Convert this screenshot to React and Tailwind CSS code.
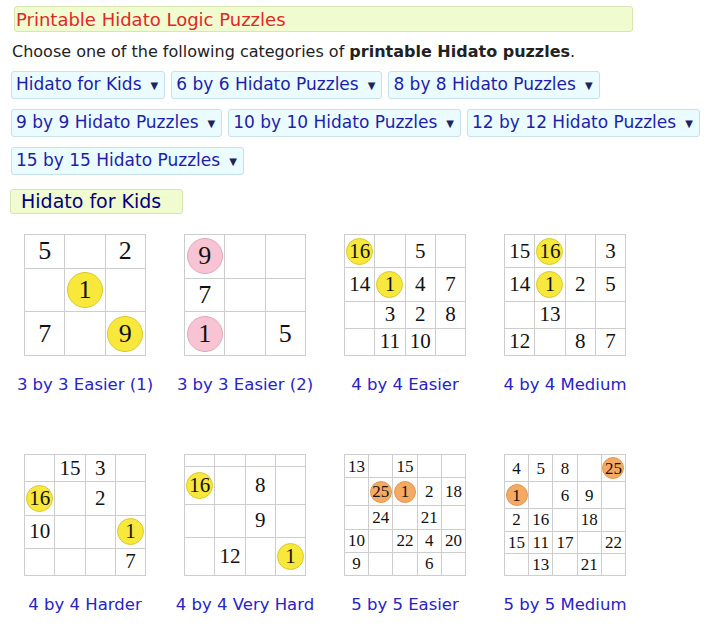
const Y = 'y', P = 'p', O = 'o';

const puzzles = [
    { label: '3 by 3 Easier (1)', n: 3, rows: [[5, '', 2], ['', [Y, 1], ''], [7, '', [Y, 9]]] },
    { label: '3 by 3 Easier (2)', n: 3, rows: [[[P, 9], '', ''], [7, '', ''], [[P, 1], '', 5]] },
    { label: '4 by 4 Easier', n: 4, rows: [[[Y, 16], '', 5, ''], [14, [Y, 1], 4, 7], ['', 3, 2, 8], ['', 11, 10, '']] },
    { label: '4 by 4 Medium', n: 4, rows: [[15, [Y, 16], '', 3], [14, [Y, 1], 2, 5], ['', 13, '', ''], [12, '', 8, 7]] },
    { label: '4 by 4 Harder', n: 4, rows: [['', 15, 3, ''], [[Y, 16], '', 2, ''], [10, '', '', [Y, 1]], ['', '', '', 7]] },
    { label: '4 by 4 Very Hard', n: 4, rows: [['', '', '', ''], [[Y, 16], '', 8, ''], ['', '', 9, ''], ['', 12, '', [Y, 1]]] },
    { label: '5 by 5 Easier', n: 5, rows: [[13, '', 15, '', ''], ['', [O, 25], [O, 1], 2, 18], ['', 24, '', 21, ''], [10, '', 22, 4, 20], [9, '', '', 6, '']] },
    { label: '5 by 5 Medium', n: 5, rows: [[4, 5, 8, '', [O, 25]], [[O, 1], '', 6, 9, ''], [2, 16, '', 18, ''], [15, 11, 17, '', 22], ['', 13, '', 21, '']] },
];

const menus = [
    'Hidato for Kids',
    '6 by 6 Hidato Puzzles',
    '8 by 8 Hidato Puzzles',
    '9 by 9 Hidato Puzzles',
    '10 by 10 Hidato Puzzles',
    '12 by 12 Hidato Puzzles',
    '15 by 15 Hidato Puzzles',
];

const sizes = {
    3: { cols: 'grid-cols-3', text: 'text-[26px]', circle: 'w-[36px] h-[36px]' },
    4: { cols: 'grid-cols-4', text: 'text-[21px]', circle: 'w-[27px] h-[27px]' },
    5: { cols: 'grid-cols-5', text: 'text-[17px]', circle: 'w-[22px] h-[22px]' },
};

const circleColor = {
    y: 'bg-[#f8e83c] border-[#d8c830]',
    p: 'bg-[#f8c4d4] border-[#e0a8b8]',
    o: 'bg-[#f4aa62] border-[#e09850]',
};

const Cell = ({ v, s }) => {
    if (Array.isArray(v)) {
        return (
            <div className="bg-white flex items-center justify-center">
                <div className={`${s.circle} rounded-full border ${circleColor[v[0]]} flex items-center justify-center`}>{v[1]}</div>
            </div>
        );
    }
    return <div className="bg-white flex items-center justify-center">{v}</div>;
};

const Puzzle = ({ p }) => {
    const s = sizes[p.n];
    return (
        <div className="flex flex-col items-center h-[220px]">
            <div
                className={`grid ${s.cols} gap-px bg-[#cdcdcd] border border-[#cdcdcd] w-[122px] h-[122px] ${s.text} text-[#111] leading-none`}
                style={{ fontFamily: '"Liberation Serif", serif' }}
            >
                {p.rows.flat().map((v, i) => <Cell key={i} v={v} s={s} />)}
            </div>
            <a className="mt-[17px] text-[16.5px] text-[#2822c8] cursor-pointer">{p.label}</a>
        </div>
    );
};

export default function App() {
    return (
        <div className="bg-white min-h-screen pt-[6px] px-[10px] text-[16px] text-[#222]" style={{ fontFamily: '"DejaVu Sans", Verdana, sans-serif' }}>
            <div className="ml-[4px] w-[619px] h-[26px] bg-[#f0fcd0] border border-[#d6e6b0] rounded-[3px] px-[1px] flex items-center text-[#e02828] text-[18px]">
                Printable Hidato Logic Puzzles
            </div>
            <p className="mt-[10px] ml-[2px] leading-[20px]">
                Choose one of the following categories of <b>printable Hidato puzzles</b>.
            </p>

            <div className="mt-[9px] ml-px flex flex-wrap gap-x-[6px] gap-y-[10px] w-[700px]">
                {menus.map((label, i) => (
                    <div key={i} className="h-[28px] bg-[#eafcff] border border-[#c6e2e8] rounded-[3px] pl-[4px] pr-[6px] flex items-center gap-[9px] text-[17px] text-[#1e1eaa]">
                        <span>{label}</span>
                        <span className="text-[10px] text-[#1c2460]">▼</span>
                    </div>
                ))}
            </div>

            <div className="mt-[14px] w-[173px] h-[25px] bg-[#f0fcd0] border border-[#d6e6b0] rounded-[3px] pl-[10px] flex items-center text-[#000080] text-[19px]">
                Hidato for Kids
            </div>

            <div className="mt-[20px] grid grid-cols-4 w-[640px] -ml-[5px]">
                {puzzles.map((p, i) => <Puzzle key={i} p={p} />)}
            </div>
        </div>
    );
}
